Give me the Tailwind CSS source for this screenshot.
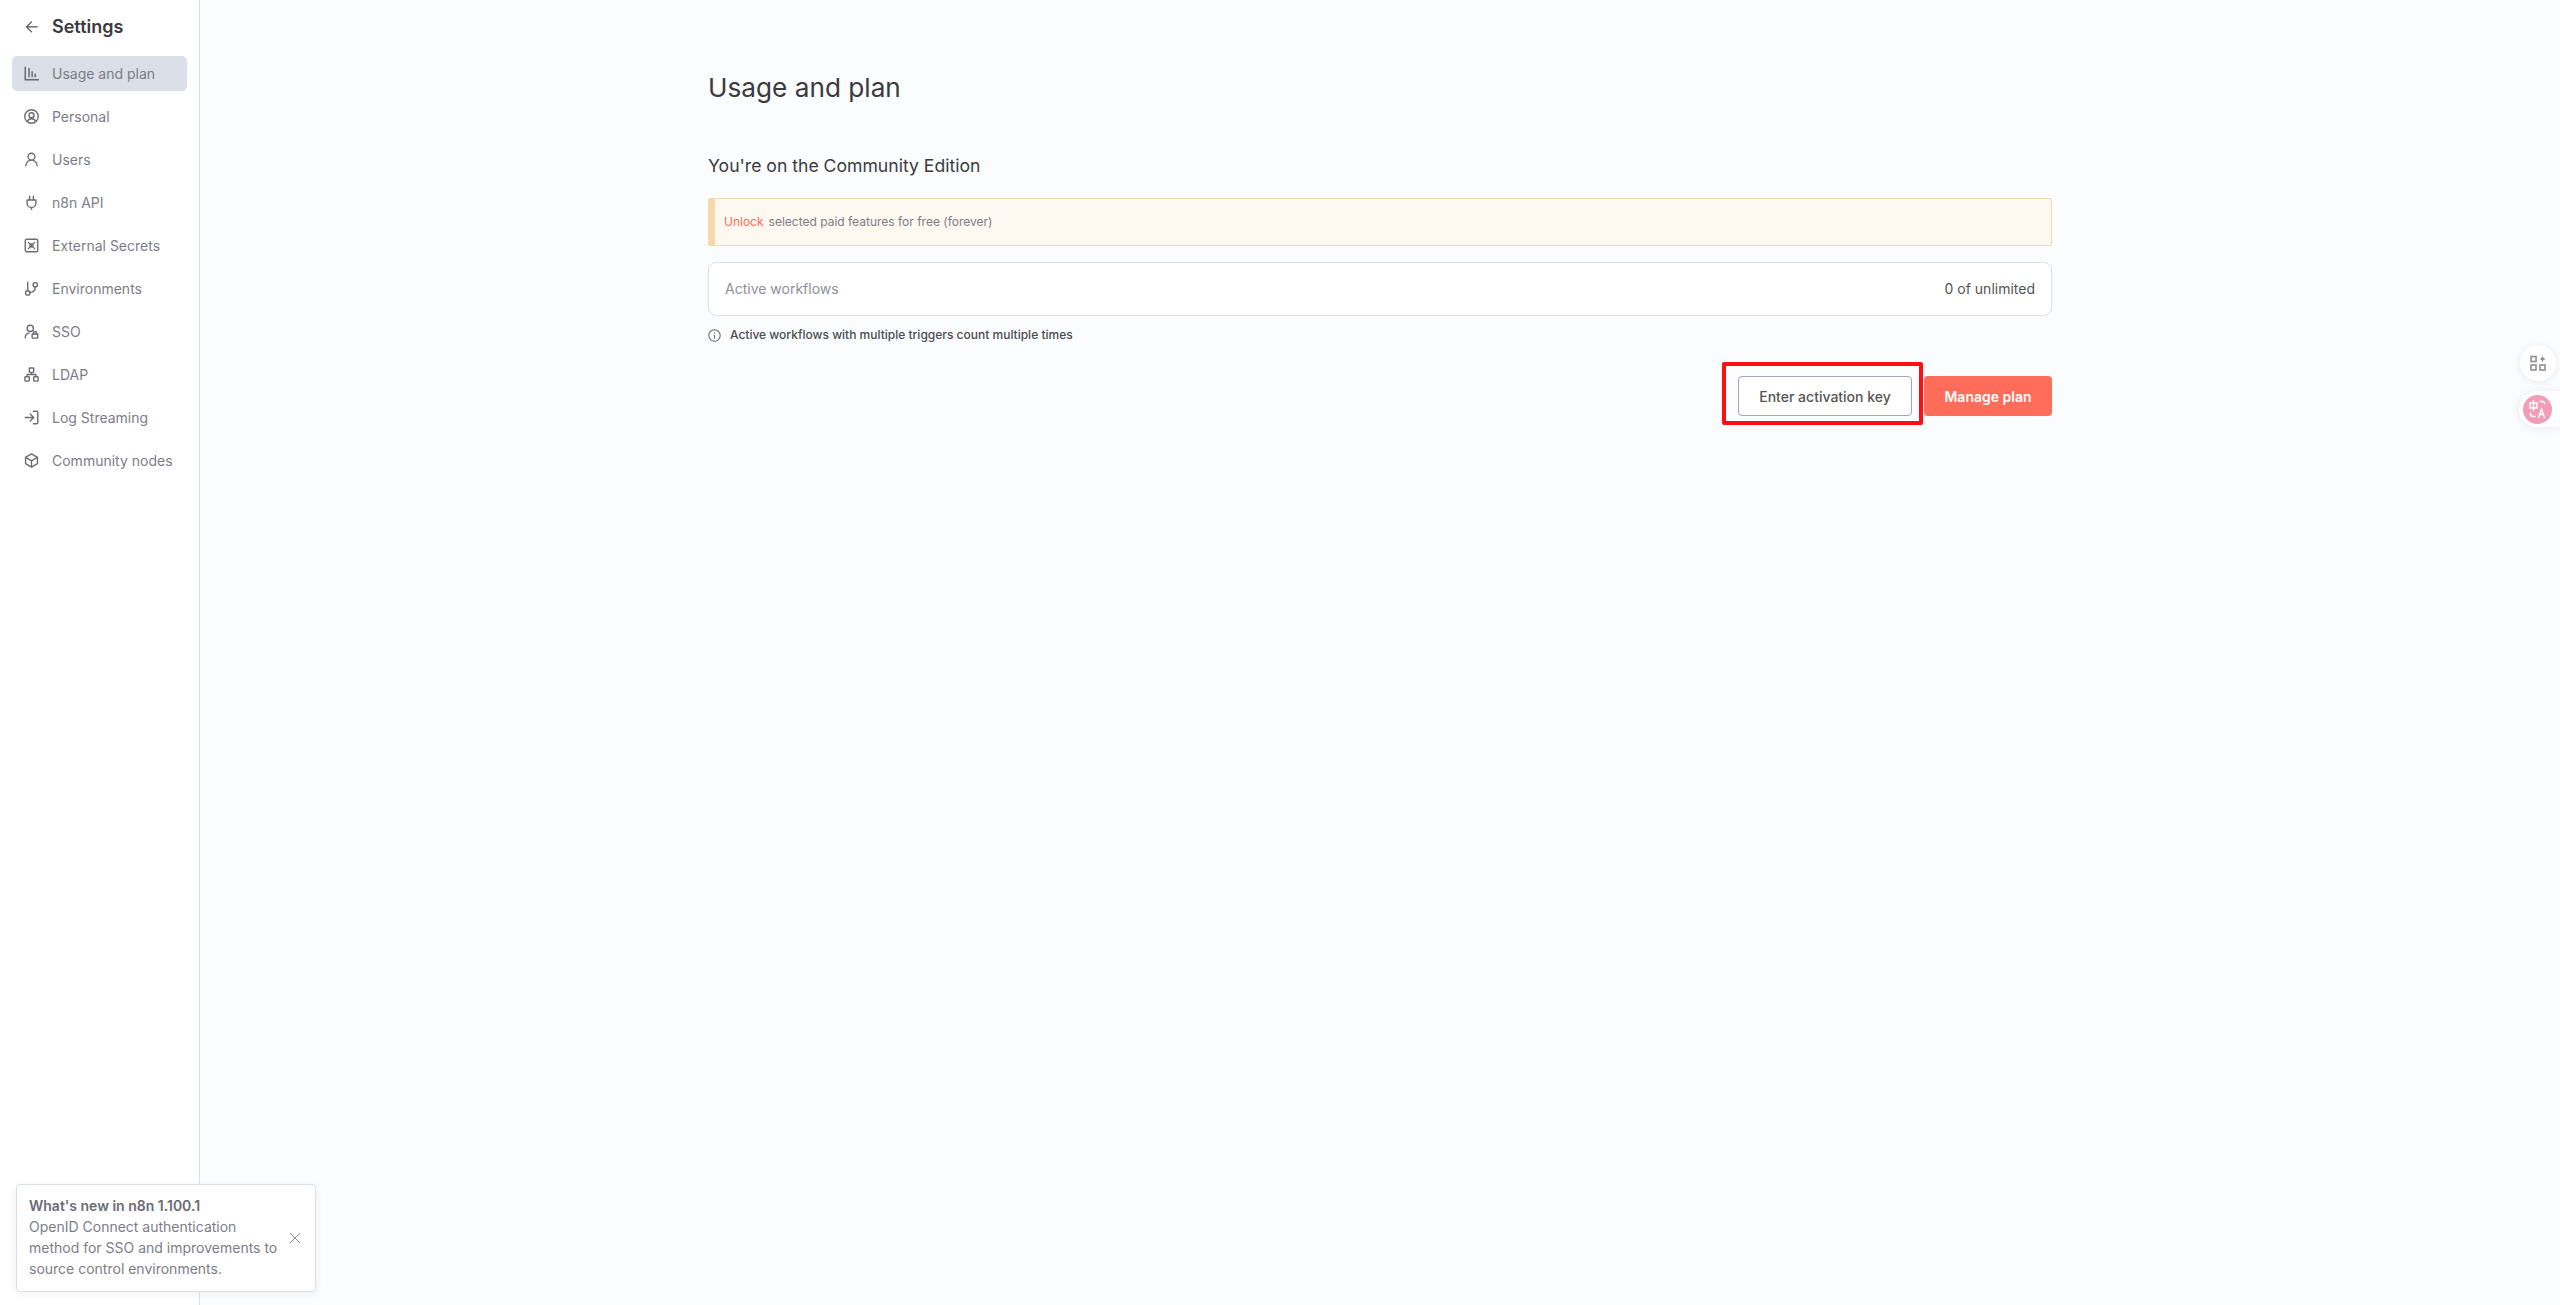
<!DOCTYPE html>
<html>
<head>
<meta charset="utf-8">
<script src="https://cdn.jsdelivr.net/npm/@tailwindcss/browser@4"></script>
</head>
<body class="bg-white font-['Inter',sans-serif]">
<div class="relative flex h-[1305px] w-[2560px] overflow-hidden bg-[#fbfcfe]">
  <aside class="h-full w-[200px] shrink-0 border-r border-[#dbdfe7] bg-white px-3 pt-[13px]">
    <div class="flex h-[28px] items-center gap-[13px] pl-[12px] text-[#555]">
      <svg class="h-[15px] w-[15px]" viewBox="0 0 24 24" fill="none" stroke="#555" stroke-width="2.2" stroke-linecap="round" stroke-linejoin="round"><path d="M21 11H5M12 3l-8 8 8 8"/></svg>
      <span class="text-[18px] font-semibold leading-none text-[#3a3a3f]">Settings</span>
    </div>
    <nav class="mt-[15px] flex flex-col gap-[8px] text-[14px] text-[#7d7d87]">
      <div class="flex h-[35px] items-center gap-[13px] rounded-[5px] bg-[#dbdfe7] pl-[12px]">
        <svg class="h-[15px] w-[15px]" viewBox="0 0 24 24" fill="none" stroke="#6b6b75" stroke-width="2.4" stroke-linecap="round"><path d="M2 2v20h21M8 4v13M13 9v8M18 13v4"/></svg>
        <span>Usage and plan</span>
      </div>
      <div class="flex h-[35px] items-center gap-[13px] pl-[12px]">
        <svg class="h-[15px] w-[15px]" viewBox="0 0 24 24" fill="none" stroke="#6b6b75" stroke-width="2.2"><circle cx="12" cy="12" r="10.800"/><circle cx="12" cy="10" r="4"/><path d="M5.500 20c1-3 3.500-4.500 6.500-4.500s5.500 1.500 6.500 4.500"/></svg>
        <span>Personal</span>
      </div>
      <div class="flex h-[35px] items-center gap-[13px] pl-[12px]">
        <svg class="h-[15px] w-[15px]" viewBox="0 0 24 24" fill="none" stroke="#6b6b75" stroke-width="2.200" stroke-linecap="round"><circle cx="12" cy="7.500" r="5.500"/><path d="M3 22c0-5 4-9 9-9s9 4 9 9"/></svg>
        <span>Users</span>
      </div>
      <div class="flex h-[35px] items-center gap-[13px] pl-[12px]">
        <svg class="h-[15px] w-[15px]" viewBox="0 0 24 24" fill="none" stroke="#6b6b75" stroke-width="2.200" stroke-linecap="round" stroke-linejoin="round"><path d="M9 2v6M15 2v6M5 8h14v5a7 7 0 0 1-14 0zM12 20v3"/></svg>
        <span>n8n API</span>
      </div>
      <div class="flex h-[35px] items-center gap-[13px] pl-[12px]">
        <svg class="h-[15px] w-[15px]" viewBox="0 0 24 24" fill="none" stroke="#6b6b75" stroke-width="2.200" stroke-linecap="round"><rect x="2" y="2" width="20" height="20" rx="2.500"/><path d="M7 7l10 10M17 7L7 17"/><circle cx="12" cy="12" r="2.500"/></svg>
        <span>External Secrets</span>
      </div>
      <div class="flex h-[35px] items-center gap-[13px] pl-[12px]">
        <svg class="h-[15px] w-[15px]" viewBox="0 0 24 24" fill="none" stroke="#6b6b75" stroke-width="2.200" stroke-linecap="round"><path d="M6 2v13"/><circle cx="6" cy="19" r="3.500"/><circle cx="18" cy="6" r="3.500"/><path d="M18 10c0 5-4 8-9 8.500"/></svg>
        <span>Environments</span>
      </div>
      <div class="flex h-[35px] items-center gap-[13px] pl-[12px]">
        <svg class="h-[15px] w-[15px]" viewBox="0 0 24 24" fill="none" stroke="#6b6b75" stroke-width="2.200" stroke-linecap="round"><circle cx="10" cy="7" r="5"/><path d="M2 22c0-4 2.500-7 6-7.500"/><rect x="13" y="16" width="9" height="6.500" rx="1"/><path d="M15 16v-1.500a2.500 2.500 0 0 1 5 0V16"/></svg>
        <span>SSO</span>
      </div>
      <div class="flex h-[35px] items-center gap-[13px] pl-[12px]">
        <svg class="h-[15px] w-[15px]" viewBox="0 0 24 24" fill="none" stroke="#6b6b75" stroke-width="2.200" stroke-linejoin="round"><rect x="8.500" y="1.500" width="7" height="7" rx="1"/><rect x="1.500" y="15.500" width="7" height="7" rx="1"/><rect x="15.500" y="15.500" width="7" height="7" rx="1"/><path d="M5 15.500V12h14v3.500M12 8.500V12"/></svg>
        <span>LDAP</span>
      </div>
      <div class="flex h-[35px] items-center gap-[13px] pl-[12px]">
        <svg class="h-[15px] w-[15px]" viewBox="0 0 24 24" fill="none" stroke="#6b6b75" stroke-width="2.200" stroke-linecap="round" stroke-linejoin="round"><path d="M15 2h5a2 2 0 0 1 2 2v16a2 2 0 0 1-2 2h-5M2 12h13M10 6.500l5.500 5.500-5.500 5.500"/></svg>
        <span>Log Streaming</span>
      </div>
      <div class="flex h-[35px] items-center gap-[13px] pl-[12px]">
        <svg class="h-[15px] w-[15px]" viewBox="0 0 24 24" fill="none" stroke="#6b6b75" stroke-width="2.200" stroke-linejoin="round"><path d="M12 1.500l9.500 5.500v10L12 22.500 2.500 17V7z"/><path d="M2.500 7L12 12.500 21.500 7M12 12.500v10"/></svg>
        <span>Community nodes</span>
      </div>
    </nav>
  </aside>

  <main class="flex-1">
    <div class="mx-auto w-[1344px] pt-[70px]">
      <h1 class="text-[26.2px] font-normal leading-[36px] text-[#3a3a3f]">Usage and plan</h1>
      <h2 class="mt-[48px] text-[17.6px] font-normal leading-[24px] text-[#3a3a3f]">You're on the Community Edition</h2>
      <div class="mt-[20px] flex h-[48px] items-center rounded-[2px] border border-l-[7px] border-[#f5d8ac] bg-[#fdf8f0] pl-[9px] text-[12px] text-[#7d7d87]">
        <span class="text-[#ff6d5a]">Unlock</span><span class="ml-[5px]">selected paid features for free (forever)</span>
      </div>
      <div class="mt-[16px] flex h-[54px] items-center justify-between rounded-[8px] border border-[#dbdfe7] bg-white px-[16px] pb-[2px] text-[14px]">
        <span class="text-[#8f8f98]">Active workflows</span>
        <span class="text-[#555]">0 of unlimited</span>
      </div>
      <div class="mt-[8px] flex h-[22px] items-center gap-[9px] text-[12px] font-medium text-[#4a4a50]">
        <svg class="h-[13px] w-[13px]" viewBox="0 0 24 24" fill="none" stroke="#6b6b75" stroke-width="2" stroke-linecap="round"><circle cx="12" cy="12" r="10.500"/><path d="M12 11v6M12 7v.500"/></svg>
        <span>Active workflows with multiple triggers count multiple times</span>
      </div>
      <div class="mt-[30px] flex items-center justify-end gap-[12px]">
        <button class="relative h-[40px] w-[174px] rounded-[4px] border border-[#a3a6b5] bg-white text-[14px] font-medium text-[#555]">Enter activation key
          <span class="absolute left-[-17px] top-[-15px] h-[63px] w-[201px] rounded-[2px] border-[4px] border-[#ff0f0f]"></span>
        </button>
        <button class="h-[40px] w-[128px] rounded-[4px] bg-[#ff6d5a] text-[14px] font-semibold text-white">Manage plan</button>
      </div>
    </div>
  </main>

  <div class="absolute left-[16px] top-[1184px] flex h-[108px] w-[300px] items-center rounded-[4px] border border-[#dbdfe7] bg-white pb-[3px] pl-[12px] pr-[14px] text-[14px] leading-[21px] text-[#7d7d87] shadow-[0_2px_8px_rgba(68,28,23,0.06)]">
    <div class="w-[256px]">
      <div class="font-semibold text-[#6b6b75]">What's new in n8n 1.100.1</div>
      <div>OpenID Connect authentication method for SSO and improvements to source control environments.</div>
    </div>
    <svg class="ml-auto mt-[3px] h-[12px] w-[12px]" viewBox="0 0 12 12" fill="none" stroke="#8a8a93" stroke-width="1"><path d="M1 1l10 10M11 1L1 11"/></svg>
  </div>

  <div class="absolute left-[2520px] top-[345px] flex h-[36px] w-[36px] items-center justify-center rounded-full bg-white shadow-[0_1px_8px_rgba(0,0,0,0.08)]">
    <svg class="h-[16px] w-[16px]" viewBox="0 0 16 16" fill="none" stroke="#8f8f8f" stroke-width="1.600"><rect x="1" y="1.500" width="5" height="5"/><rect x="1" y="10" width="5" height="5"/><rect x="10" y="10" width="5" height="5"/><path d="M12.500 0c.3 2.700 1 3.500 3.500 4-2.500.5-3.200 1.300-3.500 4-.3-2.700-1-3.500-3.500-4 2.500-.5 3.200-1.300 3.500-4z" fill="#8f8f8f" stroke="none"/></svg>
  </div>
  <div class="absolute left-[2519px] top-[391px] flex h-[36px] w-[41px] items-center rounded-l-full bg-white pl-[4px] shadow-[0_1px_8px_rgba(0,0,0,0.08)]">
    <div class="flex h-[29px] w-[29px] items-center justify-center rounded-full bg-[#f29db5]">
      <svg class="h-[22px] w-[22px]" viewBox="0 0 22 22" fill="none" stroke="#fff" stroke-width="1.500" stroke-linecap="round"><rect x="3" y="5" width="7" height="5"/><path d="M6.500 2.500v10M13 3.500h2.500a2 2 0 0 1 2 2M3.500 15v1a2.500 2.500 0 0 0 2.500 2.500h2M11.500 19.500l3-8 3 8M12.800 16.500h3.400"/></svg>
    </div>
  </div>
</div>
</body>
</html>
